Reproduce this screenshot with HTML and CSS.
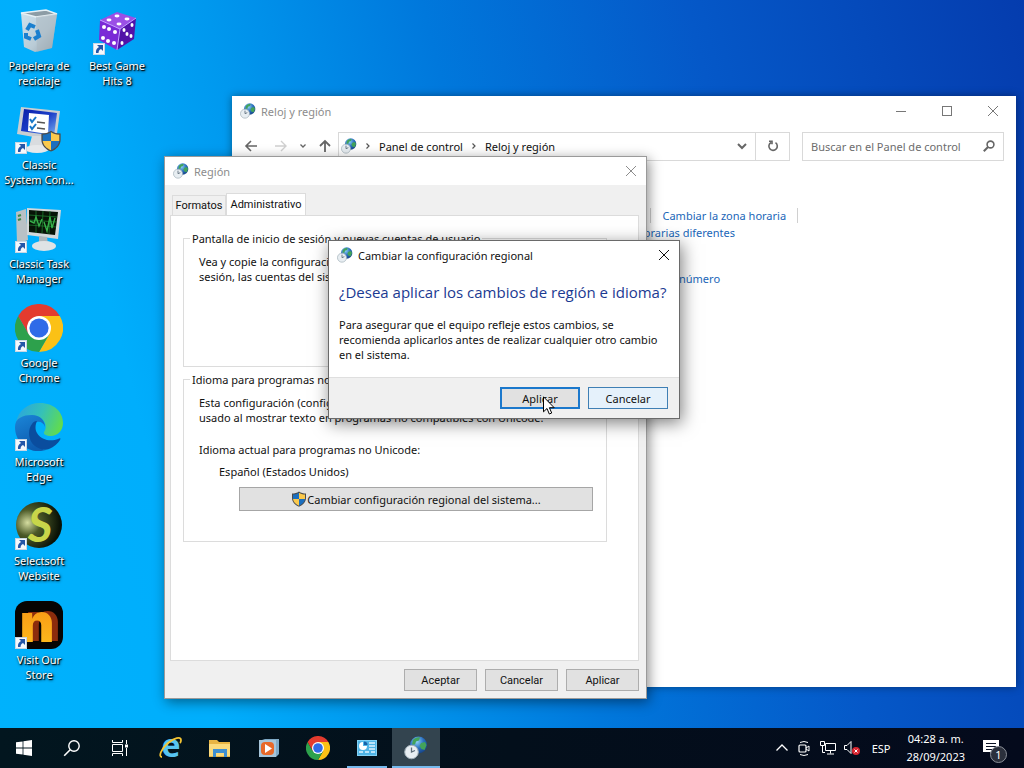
FILE: index.html
```html
<!DOCTYPE html>
<html lang="es">
<head>
    <meta charset="UTF-8">
    <meta name="viewport" content="width=device-width, initial-scale=1.0">
    <title>Escritorio</title>
    <link rel="stylesheet" href="styles.css">
</head>
<body>

    <!-- Shared icons -->
    <svg class="sprites" aria-hidden="true">
        <defs>
            <radialGradient id="globeFill" cx="0.4" cy="0.3" r="0.8">
                <stop offset="0" stop-color="#8fd3f5"/>
                <stop offset="0.5" stop-color="#2a6fc0"/>
                <stop offset="1" stop-color="#123a78"/>
            </radialGradient>
            <radialGradient id="ballFill" cx="0.25" cy="0.45" r="0.7">
                <stop offset="0" stop-color="#d5dda0"/>
                <stop offset="0.4" stop-color="#4c5a28"/>
                <stop offset="1" stop-color="#0a1206"/>
            </radialGradient>
            <linearGradient id="edgeTop" x1="0" y1="0.3" x2="1" y2="0.6">
                <stop offset="0" stop-color="#2ba6de"/>
                <stop offset="0.5" stop-color="#35c1b8"/>
                <stop offset="1" stop-color="#62dc4c"/>
            </linearGradient>
            <linearGradient id="edgeLeft" x1="0" y1="0" x2="0.4" y2="1">
                <stop offset="0" stop-color="#1b86d8"/>
                <stop offset="1" stop-color="#0d5cb0"/>
            </linearGradient>
            <linearGradient id="binFill" x1="0" y1="0" x2="1" y2="1">
                <stop offset="0" stop-color="#cfe3ef"/>
                <stop offset="0.6" stop-color="#b9cbd6"/>
                <stop offset="1" stop-color="#8f9da6"/>
            </linearGradient>
            <linearGradient id="screenFill" x1="0" y1="0" x2="1" y2="1">
                <stop offset="0" stop-color="#0a1ea8"/>
                <stop offset="0.5" stop-color="#1b3ec8"/>
                <stop offset="1" stop-color="#7db4f0"/>
            </linearGradient>
            <linearGradient id="orangeFill" x1="0" y1="0" x2="0" y2="1">
                <stop offset="0" stop-color="#f58a12"/>
                <stop offset="1" stop-color="#ffc21e"/>
            </linearGradient>
        </defs>
        <symbol id="clockGlobe" viewBox="0 0 24 24">
            <circle cx="14.500" cy="9" r="8.500" fill="url(#globeFill)"/>
            <path d="M9 4c2-2 5-3 7-2.500l-1 3-3 1-1 3-3 0zM17 7l4-1 1.500 3-2 5-3-1-2-3z" fill="#43a35a"/>
            <circle cx="7.500" cy="16" r="6.800" fill="#e8eef2" stroke="#9fadb6" stroke-width="1"/>
            <path d="M7.500 11.500V16l3.500-1.500" fill="none" stroke="#5c6c78" stroke-width="1.300"/>
        </symbol>
        <symbol id="shield" viewBox="0 0 16 16">
            <path d="M8 0.500C6 2 3.500 2.500 1 2.500V7c0 4 3 7 7 8.700C12 14 15 11 15 7V2.500C12.500 2.500 10 2 8 0.500z" fill="#4c4c4c"/>
            <path d="M8 1.700V8H2V3.500C4.500 3.400 6.300 2.800 8 1.700zM8 8h6c-.5 3.300-2.800 5.300-6 6.700z" fill="#1b6fbf"/>
            <path d="M8 1.700C9.700 2.800 11.500 3.400 14 3.500V8H8zM2 8h6v6.700C4.800 13.300 2.500 11.300 2 8z" fill="#fbc94c"/>
        </symbol>
        <symbol id="chrome" viewBox="0 0 48 48">
            <path d="M24 12H44.800A24 24 0 0 1 24 48L34.400 30z" fill="#fbc116"/>
            <path d="M13.600 30L3.200 12A24 24 0 0 0 24 48l10.400-18z" fill="#2da14c"/>
            <path d="M24 12H44.800A24 24 0 0 0 3.200 12l10.400 18z" fill="#e33b2e"/>
            <circle cx="24" cy="24" r="12" fill="#fff"/>
            <circle cx="24" cy="24" r="9.600" fill="#2f6be8"/>
        </symbol>
        <symbol id="shortcut" viewBox="0 0 12 12">
            <rect x="0.500" y="0.500" width="11" height="11" fill="#f4f8fc" stroke="#c8d6e4"/>
            <path d="M4 2h6v6L8 6C6 7 5.500 8.500 5.500 10H3C2.500 7 4 5 6 4z" fill="#2456a8"/>
        </symbol>
        <symbol id="close" viewBox="0 0 12 12">
            <path d="M1 1l10 10M11 1L1 11" fill="none" stroke="currentColor"/>
        </symbol>
        <symbol id="magnifier" viewBox="0 0 18 18">
            <circle cx="11" cy="7" r="5.200" fill="none" stroke="currentColor" stroke-width="1.400"/>
            <path d="M7.200 10.800L1.200 16.800" stroke="currentColor" stroke-width="1.600"/>
        </symbol>
        <symbol id="magnifierBold" viewBox="0 0 12 12">
            <circle cx="7.500" cy="4.500" r="3.400" fill="none" stroke="currentColor" stroke-width="1.600"/>
            <path d="M5 7L0.800 11.200" stroke="currentColor" stroke-width="2"/>
        </symbol>
    </svg>

    <main class="desktop">

        <ul class="shortcuts">
            <li class="shortcut">
                <svg class="shortcut-icon" viewBox="0 0 48 48">
                    <path d="M6 6l25-3 11 4-5 34-17 4-11-5z" fill="url(#binFill)"/>
                    <path d="M6 6l15 4 21-3-11-4z" fill="#8c9ca5" stroke="#e6f0f5" stroke-width="1.500"/>
                    <path d="M21 10l21-3-5 34-15 4z" fill="#a9b6bd" opacity="0.500"/>
                    <g fill="none" stroke="#1a7fcf" stroke-width="4">
                        <path d="M12 23l3-5 5 2"/>
                        <path d="M22 23l2 6-5 3"/>
                        <path d="M16 32l-5-2 0-4"/>
                    </g>
                </svg>
                <span class="shortcut-label">Papelera de reciclaje</span>
            </li>
            <li class="shortcut">
                <svg class="shortcut-icon" viewBox="0 0 48 48">
                    <path d="M6 1l39 4-4 30L2 28z" fill="#c9ced2"/>
                    <path d="M9 3l33 4-3 23L6 25z" fill="url(#screenFill)"/>
                    <path d="M14 7l20 2-1 19-20-3z" fill="#fff"/>
                    <path d="M15 13l2 3 4-5M15 20l2 3 4-5" fill="none" stroke="#1677c8" stroke-width="2"/>
                    <path d="M22 16l8 1M22 22l8 1" stroke="#555" stroke-width="1.500"/>
                    <path d="M17 30h10l3 11H14z" fill="#d9dcdf"/>
                    <ellipse cx="22" cy="43" rx="12" ry="4" fill="#e6e8ea"/>
                    <use href="#shield" x="25" y="24" width="22" height="22"/>
                    <use href="#shortcut" y="36" width="12" height="12"/>
                </svg>
                <span class="shortcut-label">Classic System Con...</span>
            </li>
            <li class="shortcut">
                <svg class="shortcut-icon" viewBox="0 0 48 48">
                    <path d="M1 7l10-3 2 31-11 4z" fill="#b9c1c5"/>
                    <path d="M3 11l3-1M3 15l3-1" stroke="#3b8a4b" stroke-width="2"/>
                    <path d="M12 3l34 2-3 29-31-4z" fill="#d3d8da"/>
                    <path d="M14 5l29 2-3 23-26-3z" fill="#071407"/>
                    <path d="M14 10l28 2M14 15l28 2M14 20l27 2M21 6v22M28 6l-1 22M35 6l-1 23" stroke="#1d7a2d" stroke-width="0.800"/>
                    <path d="M15 16l4 2 2-6 3 9 3-7M29 17l3 9 3-14 2 11 3-10" fill="none" stroke="#37b04a" stroke-width="1.400"/>
                    <path d="M24 31l8 1 1 7h-9z" fill="#aeb5b9"/>
                    <ellipse cx="29" cy="41" rx="12" ry="5" fill="#dfe3e5"/>
                    <use href="#shortcut" y="36" width="12" height="12"/>
                </svg>
                <span class="shortcut-label">Classic Task Manager</span>
            </li>
            <li class="shortcut">
                <svg class="shortcut-icon" viewBox="0 0 48 48">
                    <use href="#chrome" width="48" height="48"/>
                    <use href="#shortcut" y="36" width="12" height="12"/>
                </svg>
                <span class="shortcut-label">Google Chrome</span>
            </li>
            <li class="shortcut">
                <svg class="shortcut-icon" viewBox="0 0 48 48">
                    <path d="M1 20C3 7 13 0 25 0c14 0 23 9 23 20 0 8-6 13-12 13-5 0-8-2-7-4 4-5 1-14-8-16C11 11 4 15 1 20z" fill="url(#edgeTop)"/>
                    <path d="M0 24C0 15 8 12 17 12c8 0 13 5 13 12-1-4-5-6-8-5-5 2-7 8-5 14 2 7 8 13 14 14C14 52 0 40 0 24z" fill="url(#edgeLeft)"/>
                    <path d="M17 21c-4 5-4 13 0 19 4 5 11 8 17 6 5-2 9-6 11-9 1-2 0-2-2-1-7 3-17 1-21-6-2-3-2-8 0-12-2 0-4 1-5 3z" fill="#0a4d9e"/>
                    <use href="#shortcut" y="36" width="12" height="12"/>
                </svg>
                <span class="shortcut-label">Microsoft Edge</span>
            </li>
            <li class="shortcut">
                <svg class="shortcut-icon" viewBox="0 0 48 48">
                    <circle cx="24" cy="23" r="23" fill="url(#ballFill)"/>
                    <text class="logo-s" x="25" y="40" text-anchor="middle">S</text>
                    <use href="#shortcut" y="36" width="12" height="12"/>
                </svg>
                <span class="shortcut-label">Selectsoft Website</span>
            </li>
            <li class="shortcut">
                <svg class="shortcut-icon" viewBox="0 0 48 48">
                    <rect width="48" height="48" rx="12" fill="#070403"/>
                    <text class="logo-n" x="22" y="41" text-anchor="middle">n</text>
                    <use href="#shortcut" y="36" width="12" height="12"/>
                </svg>
                <span class="shortcut-label">Visit Our Store</span>
            </li>
            <li class="shortcut">
                <svg class="shortcut-icon" viewBox="0 0 48 48">
                    <path d="M7 13L24 5l19 6-16 11z" fill="#9b4fe6"/>
                    <path d="M7 13l20 9-3 21L6 33z" fill="#7a2ad6"/>
                    <path d="M27 22l16-11-2 21-17 11z" fill="#5212a8"/>
                    <path d="M7 13l20 9 16-11M27 22l-3 21" fill="none" stroke="#c79bff"/>
                    <g fill="#fff">
                        <ellipse cx="24" cy="9" rx="2.500" ry="1.400"/>
                        <ellipse cx="16" cy="13" rx="2.500" ry="1.400"/>
                        <ellipse cx="34" cy="12" rx="2.500" ry="1.400"/>
                        <ellipse cx="26" cy="17" rx="2.500" ry="1.400"/>
                        <circle cx="11" cy="20" r="2"/>
                        <circle cx="16" cy="22" r="2"/>
                        <circle cx="22" cy="25" r="2"/>
                        <circle cx="10" cy="31" r="2"/>
                        <circle cx="15" cy="34" r="2"/>
                        <circle cx="21" cy="36" r="2"/>
                        <ellipse cx="39" cy="18" rx="1.500" ry="2"/>
                        <ellipse cx="31" cy="23" rx="1.500" ry="2"/>
                        <ellipse cx="34" cy="27" rx="1.500" ry="2"/>
                        <ellipse cx="38" cy="29" rx="1.500" ry="2"/>
                        <ellipse cx="29" cy="36" rx="1.500" ry="2"/>
                    </g>
                    <use href="#shortcut" y="36" width="12" height="12"/>
                </svg>
                <span class="shortcut-label">Best Game Hits 8</span>
            </li>
        </ul>

        <!-- Control panel window -->
        <section class="window explorer">
            <header class="explorer-title">
                <svg class="icon-16"><use href="#clockGlobe"/></svg>
                <h2 class="window-name inactive">Reloj y región</h2>
                <button class="caption-button" aria-label="Minimizar">
                    <svg class="icon-12" viewBox="0 0 12 12"><path d="M1 6.500h10" stroke="currentColor"/></svg>
                </button>
                <button class="caption-button" aria-label="Maximizar">
                    <svg class="icon-12" viewBox="0 0 12 12"><rect x="1.500" y="1.500" width="9" height="9" fill="none" stroke="currentColor"/></svg>
                </button>
                <button class="caption-button" aria-label="Cerrar">
                    <svg class="icon-12"><use href="#close"/></svg>
                </button>
            </header>
            <nav class="explorer-nav">
                <div class="nav-arrows">
                    <button class="nav-button" aria-label="Atrás">
                        <svg class="icon-14" viewBox="0 0 14 14"><path d="M13 7H2M7 2L2 7l5 5" fill="none" stroke="currentColor" stroke-width="1.600"/></svg>
                    </button>
                    <button class="nav-button disabled" aria-label="Adelante">
                        <svg class="icon-14" viewBox="0 0 14 14"><path d="M1 7h11M7 2l5 5-5 5" fill="none" stroke="currentColor" stroke-width="1.400"/></svg>
                    </button>
                    <button class="nav-button narrow" aria-label="Recientes">
                        <svg class="icon-8" viewBox="0 0 8 8"><path d="M1.500 2.500L4 5l2.500-2.500" fill="none" stroke="currentColor" stroke-width="1.300"/></svg>
                    </button>
                    <button class="nav-button" aria-label="Subir">
                        <svg class="icon-14" viewBox="0 0 14 14"><path d="M7 13V2M2 7l5-5 5 5" fill="none" stroke="currentColor" stroke-width="1.800"/></svg>
                    </button>
                </div>
                <div class="address">
                    <svg class="icon-16"><use href="#clockGlobe"/></svg>
                    <svg class="icon-8" viewBox="0 0 8 8"><path d="M2.500 1.500L5 4 2.500 6.500" fill="none" stroke="#555" stroke-width="1.200"/></svg>
                    <span class="crumb">Panel de control</span>
                    <svg class="icon-8" viewBox="0 0 8 8"><path d="M2.500 1.500L5 4 2.500 6.500" fill="none" stroke="#555" stroke-width="1.200"/></svg>
                    <span class="crumb">Reloj y región</span>
                    <button class="address-drop" aria-label="Ubicaciones anteriores">
                        <svg class="icon-12" viewBox="0 0 12 12"><path d="M2 4l4 4 4-4" fill="none" stroke="currentColor" stroke-width="2"/></svg>
                    </button>
                    <button class="address-refresh" aria-label="Actualizar">
                        <svg class="icon-12" viewBox="0 0 12 12"><path d="M8.500 2.700a4.200 4.200 0 1 1-4.500-.2M2 1.200h3v3" fill="none" stroke="currentColor" stroke-width="1.600"/></svg>
                    </button>
                </div>
                <label class="search">
                    <input class="search-input" type="text" placeholder="Buscar en el Panel de control" aria-label="Buscar en el Panel de control">
                    <svg class="icon-12"><use href="#magnifierBold"/></svg>
                </label>
            </nav>
            <div class="explorer-content">
                <div class="task-row">
                    <a class="task-link task-end" href="#">Establecer la fecha y la hora</a>
                    <a class="task-link task-end" href="#">Cambiar la zona horaria</a>
                </div>
                <div class="task-row"><a class="task-link" href="#">Agregar relojes para zonas horarias diferentes</a></div>
                <div class="task-row task-region"><a class="task-link" href="#">Cambiar formatos de fecha, hora o número</a></div>
            </div>
        </section>

        <!-- Region window -->
        <section class="window region">
            <header class="window-title">
                <svg class="icon-16"><use href="#clockGlobe"/></svg>
                <h2 class="window-name inactive">Región</h2>
                <button class="window-close inactive" aria-label="Cerrar"><svg class="icon-12"><use href="#close"/></svg></button>
            </header>
            <div class="region-body">
                <div class="tabs">
                    <button class="tab">Formatos</button>
                    <button class="tab tab-active">Administrativo</button>
                </div>
                <div class="tab-panel">
                    <fieldset class="group group-welcome">
                        <legend>Pantalla de inicio de sesión y nuevas cuentas de usuario</legend>
                        <p class="group-text">Vea y copie la configuración internacional en la pantalla de inicio de<br>sesión, las cuentas del sistema y las nuevas cuentas de usuario.</p>
                    </fieldset>
                    <fieldset class="group group-unicode">
                        <legend>Idioma para programas no Unicode</legend>
                        <p class="group-text">Esta configuración (configuración regional del sistema) controla el idioma<br>usado al mostrar texto en programas no compatibles con Unicode.</p>
                        <p class="group-text language-title">Idioma actual para programas no Unicode:</p>
                        <p class="group-text language-name">Español (Estados Unidos)</p>
                        <button class="button locale-button">
                            <svg class="icon-16"><use href="#shield"/></svg>
                            Cambiar configuración regional del sistema...
                        </button>
                    </fieldset>
                </div>
                <div class="region-actions">
                    <button class="button small-button">Aceptar</button>
                    <button class="button small-button">Cancelar</button>
                    <button class="button small-button">Aplicar</button>
                </div>
            </div>
        </section>

        <!-- Confirmation dialog -->
        <section class="window dialog" role="dialog" aria-labelledby="dialogTitle">
            <header class="window-title">
                <svg class="icon-16"><use href="#clockGlobe"/></svg>
                <h2 class="window-name" id="dialogTitle">Cambiar la configuración regional</h2>
                <button class="window-close" aria-label="Cerrar"><svg class="icon-12"><use href="#close"/></svg></button>
            </header>
            <div class="dialog-body">
                <h3 class="dialog-question">¿Desea aplicar los cambios de región e idioma?</h3>
                <p class="dialog-text">Para asegurar que el equipo refleje estos cambios, se<br>recomienda aplicarlos antes de realizar cualquier otro cambio<br>en el sistema.</p>
            </div>
            <footer class="dialog-actions">
                <button class="button dialog-button default">Aplicar</button>
                <button class="button dialog-button hot">Cancelar</button>
            </footer>
        </section>

        <svg class="cursor" viewBox="0 0 12 19">
            <path d="M0.500 0.800v15l3.500-3.300 2.300 5.500 2.400-1-2.300-5.300h4.800z" fill="#fff" stroke="#000"/>
        </svg>
    </main>

    <footer class="taskbar">
        <div class="taskbar-system">
            <button class="taskbar-button" aria-label="Inicio">
                <svg class="icon-16" viewBox="0 0 16 16"><path d="M0 2.300L6.600 1.400V7.600H0zM7.400 1.300L16 0v7.600H7.400zM0 8.400h6.600v6.200L0 13.700zM7.400 8.400H16V16l-8.600-1.300z" fill="#fff"/></svg>
            </button>
            <button class="taskbar-button" aria-label="Buscar"><svg class="icon-18"><use href="#magnifier"/></svg></button>
            <button class="taskbar-button" aria-label="Vista de tareas">
                <svg class="icon-16" viewBox="0 0 16 16"><path d="M0.500 0v2.500h10V0M0.500 16v-2.500h10V16M0.500 4.500h10v7H0.500zM14.500 0v4M14.500 8v8" fill="none" stroke="#fff"/><path d="M13 4.500h3v3h-3z" fill="#fff"/></svg>
            </button>
        </div>
        <div class="taskbar-apps">
            <button class="taskbar-button" aria-label="Internet Explorer">
                <svg class="icon-24" viewBox="0 0 24 24">
                    <text class="logo-e" x="12" y="21" text-anchor="middle">e</text>
                    <path d="M3 21C-1 21 2 13 9 7c6-5 13-7 13-3 0 1 0 2-1 3" fill="none" stroke="#f5c534" stroke-width="1.800"/>
                </svg>
            </button>
            <button class="taskbar-button" aria-label="Explorador de archivos">
                <svg class="icon-24" viewBox="0 0 24 24"><path d="M1 4h8l2 2h11v15H1z" fill="#e8b443"/><path d="M1 8h21v12H1z" fill="#fbda7c"/><path d="M5 13h14v8h-3v-4H8v4H5z" fill="#3f8fd0"/></svg>
            </button>
            <button class="taskbar-button" aria-label="Reproductor multimedia">
                <svg class="icon-24" viewBox="0 0 24 24"><path d="M5 4l3-1h14v15l-3 3z" fill="#7faac8"/><path d="M2 4h17v17H2z" fill="#a7c5da"/><rect x="4" y="6" width="13" height="13" rx="4" fill="#e8692a"/><path d="M8 8l7 4.500L8 17z" fill="#fff"/></svg>
            </button>
            <button class="taskbar-button" aria-label="Google Chrome"><svg class="icon-24"><use href="#chrome"/></svg></button>
            <button class="taskbar-button running" aria-label="Panel de control">
                <svg class="icon-24" viewBox="0 0 24 24"><path d="M2 4h20v16H2z" fill="#83d2f5"/><path d="M3 5h18v14H3z" fill="#4fb4e6"/><path d="M8 6v4h4a4 4 0 1 1-4-4z" fill="#fff"/><path d="M9 5.500A3.500 3.500 0 0 1 12.500 9H9z" fill="#1762a8"/><path d="M14 7h6M14 10h6M14 13h6M4 16h4M10 16h4M16 16h4" stroke="#dff4ff" stroke-width="1.500"/></svg>
            </button>
            <button class="taskbar-button running current" aria-label="Reloj y región"><svg class="icon-24"><use href="#clockGlobe"/></svg></button>
        </div>
        <div class="tray">
            <svg class="icon-12" viewBox="0 0 12 12"><path d="M0.500 8.500L6 3l5.500 5.500" fill="none" stroke="#fff" stroke-width="1.300"/></svg>
            <svg class="icon-16" viewBox="0 0 16 16"><rect x="3" y="5" width="7" height="7" rx="1" fill="none" stroke="#fff" stroke-width="1.200"/><path d="M10 8l3-2v5l-3-2M4 2.500q4-2 8 0M4 14.500q4 2 8 0" fill="none" stroke="#fff"/></svg>
            <svg class="icon-16" viewBox="0 0 16 16"><path d="M5.500 3.500h10v7h-10zM10.500 10.500v3M7 14h7M0.500 1.500h4v4h-4zM2.500 5.500v7H5" fill="none" stroke="#fff"/></svg>
            <svg class="icon-16" viewBox="0 0 16 16"><path d="M0.500 5.500h2.500l4-4v12l-4-4H0.500z" fill="none" stroke="#fff"/><circle cx="12" cy="11" r="4" fill="#d8242f"/><path d="M10.500 9.500l3 3M13.500 9.500l-3 3" stroke="#fff"/></svg>
            <span class="tray-language">ESP</span>
            <time class="tray-clock">04:28 a. m.<br>28/09/2023</time>
            <div class="tray-notices">
                <svg class="icon-16" viewBox="0 0 16 16"><path d="M0 0h16v12h-5v4l-4-4H0z" fill="#fff"/><path d="M3 3.500h10M3 6.500h10M3 9.500h6" stroke="#0a1224"/></svg>
                <span class="tray-count">1</span>
            </div>
        </div>
    </footer>

</body>
</html>
```

FILE: styles.css
```css
* {
    box-sizing: border-box;
}

body {
    margin: 0;
    height: 100vh;
    display: flex;
    flex-direction: column;
    overflow: hidden;
    font-family: "Noto Sans", "Open Sans", sans-serif;
    font-size: 11px;
    line-height: 15px;
    color: #111;
}

h2, h3, p, ul {
    margin: 0;
    padding: 0;
    font-size: 11px;
    font-weight: normal;
}

button {
    font: inherit;
    color: inherit;
    background: none;
    border: none;
    padding: 0;
    margin: 0;
}

.sprites {
    position: absolute;
    width: 0;
    height: 0;
}

/* Icon sizes */
.icon-8, .icon-12, .icon-14, .icon-16, .icon-18, .icon-24 {
    display: block;
    flex: none;
}
.icon-8 {
    width: 8px;
    height: 8px;
}
.icon-12 {
    width: 12px;
    height: 12px;
}
.icon-14 {
    width: 14px;
    height: 14px;
}
.icon-16 {
    width: 16px;
    height: 16px;
}
.icon-18 {
    width: 18px;
    height: 18px;
}
.icon-24 {
    width: 24px;
    height: 24px;
}

/* Desktop */
.desktop {
    position: relative;
    flex: 1;
    background: linear-gradient(76deg, #00b2fc 0%, #00aefc 18%, #0098ee 32%, #0078dc 50%, #0558c8 72%, #053cae 100%);
}

.shortcuts {
    display: grid;
    grid-auto-flow: column;
    grid-template-rows: repeat(7, 99px);
    grid-auto-columns: 78px;
    list-style: none;
}

.shortcut {
    display: flex;
    flex-direction: column;
    align-items: center;
    padding-top: 7px;
}

.shortcut-icon {
    width: 48px;
    height: 48px;
    margin-bottom: 3px;
    flex: none;
}

.shortcut-label {
    width: 72px;
    text-align: center;
    color: #fff;
    text-shadow: 1px 1px 1px #000, 1px 1px 3px #000;
}

.logo-s {
    font: italic 700 48px Lato, sans-serif;
    fill: #c8d64a;
}
.logo-n {
    font: 900 54px Inter, sans-serif;
    fill: url(#orangeFill);
    filter: drop-shadow(6px -1px 0 #8c2c0c);
}
.logo-e {
    font: bold 32px "Open Sans", sans-serif;
    fill: #57c5f2;
}

/* Windows */
.window {
    position: absolute;
    display: flex;
    flex-direction: column;
    background-color: #fff;
}

.window-name {
    flex: 1;
}

.inactive {
    color: #8c8c8c;
}

.window-title {
    display: flex;
    align-items: center;
    height: 28px;
    padding: 0 7px 0 8px;
    gap: 5px;
    background-color: #fff;
}

.window-close {
    padding: 2px;
}

.button {
    background-color: #e1e1e1;
    border: 1px solid #adadad;
}

/* Explorer */
.explorer {
    left: 232px;
    top: 96px;
    width: 784px;
    height: 591px;
    box-shadow: 0 0 8px rgba(0, 0, 0, 0.4);
}

.explorer-title {
    display: flex;
    align-items: center;
    height: 30px;
    padding-left: 8px;
}
.explorer-title .window-name {
    padding-left: 5px;
}

.caption-button {
    display: flex;
    justify-content: center;
    width: 46px;
    color: #777;
}

.explorer-nav {
    display: flex;
    align-items: center;
    height: 40px;
    padding: 0 12px 0 4px;
}

.nav-arrows {
    display: flex;
    align-items: center;
    width: 102px;
    color: #666;
}

.nav-button {
    display: flex;
    justify-content: center;
    flex: none;
    width: 30px;
}
.nav-button.narrow {
    width: 14px;
}
.nav-button.disabled {
    color: #d0d0d0;
}

.address {
    display: flex;
    align-items: center;
    flex: 1;
    height: 29px;
    padding-left: 2px;
    gap: 7px;
    border: 1px solid #d9d9d9;
}

.address-drop {
    margin-left: auto;
    color: #666;
}

.address-refresh {
    display: flex;
    align-items: center;
    justify-content: center;
    width: 34px;
    height: 27px;
    border-left: 1px solid #d9d9d9;
    color: #666;
}

.search {
    display: flex;
    align-items: center;
    width: 202px;
    height: 29px;
    margin-left: 12px;
    padding: 0 8px;
    border: 1px solid #d9d9d9;
    color: #666;
}

.search-input {
    flex: 1;
    min-width: 0;
    padding: 0;
    border: none;
    outline: none;
    font: inherit;
}
.search-input::placeholder {
    color: #6d6d6d;
    opacity: 1;
}

.explorer-content {
    display: flex;
    flex-direction: column;
    align-items: flex-start;
    gap: 2px;
    padding: 42px 0 0 264px;
}

.task-row {
    display: flex;
}

.task-region {
    margin-top: 29px;
}

.task-link {
    color: #1a66b8;
    text-decoration: none;
}

.task-end {
    margin-right: 11px;
    padding-right: 11px;
    border-right: 1px solid #d0d0d0;
}

/* Region window */
.region {
    left: 164px;
    top: 156px;
    width: 483px;
    height: 543px;
    border: 1px solid #9a9a9a;
    box-shadow: 2px 3px 12px rgba(0, 0, 0, 0.45);
}

.region-body {
    display: flex;
    flex-direction: column;
    flex: 1;
    padding: 8px 7px 7px 5px;
    background-color: #f0f0f0;
}

.tabs {
    display: flex;
    align-items: flex-end;
    padding-left: 2px;
    font: 11px/15px Roboto, sans-serif;
}

.tab {
    width: 54px;
    height: 20px;
    border: 1px solid #dcdcdc;
    border-bottom: none;
}
.tab-active {
    width: 80px;
    height: 23px;
    margin-bottom: -1px;
    padding-bottom: 2px;
    background-color: #fff;
}

.tab-panel {
    flex: 1;
    padding: 15px 31px 0 12px;
    background-color: #fff;
    border: 1px solid #dcdcdc;
}

.group {
    min-width: 0;
    margin: 0;
    padding: 8px 13px 0 15px;
    border: 1px solid #dcdcdc;
}
.group legend {
    margin-left: -9px;
    padding: 0 2px;
}

.group-welcome {
    height: 136px;
    margin-bottom: 5px;
}

.group-unicode {
    height: 170px;
}

.group-text {
    white-space: nowrap;
}

.language-title {
    margin-top: 17px;
}

.language-name {
    margin-top: 7px;
    padding-left: 20px;
}

.locale-button {
    display: flex;
    align-items: center;
    justify-content: center;
    width: 354px;
    height: 24px;
    margin: 8px 0 0 40px;
    border-color: #a6a6a6;
}

.region-actions {
    display: flex;
    justify-content: flex-end;
    gap: 8px;
    padding-top: 8px;
}

.small-button {
    width: 73px;
    height: 22px;
    font: 11px/15px Roboto, sans-serif;
}

/* Confirmation dialog */
.dialog {
    left: 328px;
    top: 240px;
    width: 352px;
    height: 179px;
    border: 1px solid #6a6a6a;
    box-shadow: 2px 4px 16px rgba(0, 0, 0, 0.5);
}

.dialog-body {
    flex: 1;
    padding: 12px 10px 0;
    white-space: nowrap;
}

.dialog-question {
    margin-bottom: 14px;
    font: 15px/22px "Open Sans", sans-serif;
    color: #1b3a92;
}

.dialog-actions {
    display: flex;
    justify-content: flex-end;
    gap: 8px;
    height: 41px;
    padding: 9px 11px;
    border-top: 1px solid #dfdfdf;
    background-color: #f0f0f0;
}

.dialog-button {
    width: 80px;
    height: 22px;
}
.dialog-button.default {
    border: 2px solid #1b78cc;
}
.dialog-button.hot {
    background-color: #e5f1fb;
    border-color: #3f7fb4;
}

.cursor {
    position: absolute;
    left: 543px;
    top: 396px;
    width: 12px;
    height: 19px;
}

/* Taskbar */
.taskbar {
    display: flex;
    height: 40px;
    background: linear-gradient(90deg, #02161f 0%, #030f1b 50%, #040a1c 100%);
    color: #fff;
}

.taskbar-system, .taskbar-apps {
    display: flex;
}

.taskbar-apps {
    gap: 1px;
    margin-left: 3px;
}

.taskbar-button {
    display: flex;
    align-items: center;
    justify-content: center;
    width: 48px;
    height: 40px;
}

.running {
    background: linear-gradient(#76b9ed, #76b9ed) bottom / 40px 2px no-repeat;
}
.current {
    background-color: #33444f;
    background-size: 48px 2px;
}

.tray {
    display: flex;
    align-items: center;
    gap: 8px;
    margin-left: auto;
    padding-right: 25px;
}

.tray-language {
    margin-left: 4px;
}

.tray-clock {
    margin-left: 8px;
    line-height: 18px;
    text-align: center;
}

.tray-notices {
    position: relative;
    margin-left: 10px;
}

.tray-count {
    position: absolute;
    left: 7px;
    top: 6px;
    width: 17px;
    height: 17px;
    border: 1px solid #8a8f98;
    border-radius: 50%;
    background-color: #2b303c;
    text-align: center;
}
```
